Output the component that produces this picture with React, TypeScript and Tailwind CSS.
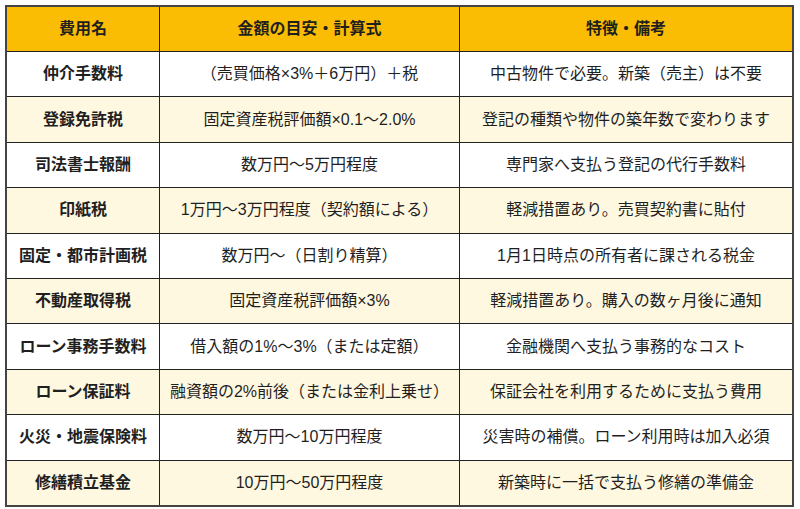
const rows = [
  ["仲介手数料", "（売買価格×3%＋6万円）＋税", "中古物件で必要。新築（売主）は不要"],
  ["登録免許税", "固定資産税評価額×0.1〜2.0%", "登記の種類や物件の築年数で変わります"],
  ["司法書士報酬", "数万円〜5万円程度", "専門家へ支払う登記の代行手数料"],
  ["印紙税", "1万円〜3万円程度（契約額による）", "軽減措置あり。売買契約書に貼付"],
  ["固定・都市計画税", "数万円〜（日割り精算）", "1月1日時点の所有者に課される税金"],
  ["不動産取得税", "固定資産税評価額×3%", "軽減措置あり。購入の数ヶ月後に通知"],
  ["ローン事務手数料", "借入額の1%〜3%（または定額）", "金融機関へ支払う事務的なコスト"],
  ["ローン保証料", "融資額の2%前後（または金利上乗せ）", "保証会社を利用するために支払う費用"],
  ["火災・地震保険料", "数万円〜10万円程度", "災害時の補償。ローン利用時は加入必須"],
  ["修繕積立基金", "10万円〜50万円程度", "新築時に一括で支払う修繕の準備金"],
];

export default function App() {
  return (
    <div
      className="bg-white w-[800px] h-[509px] pt-[5px] pl-[5px] text-[16px] text-[#1f1f1f]"
      style={{ fontFamily: '"Liberation Sans", "Noto Sans CJK JP", sans-serif' }}
    >
      <div className="w-[789px] border-2 border-[#444]">
        {/* Header */}
        <div className="flex h-[44px] bg-[#fbbc04] font-bold">
          <div className="w-[153px] flex items-center justify-center border-r border-[#222]">費用名</div>
          <div className="w-[300px] flex items-center justify-center border-r border-[#222]">金額の目安・計算式</div>
          <div className="flex-1 flex items-center justify-center">特徴・備考</div>
        </div>

        {/* Body */}
        {rows.map((r, i) => (
          <div
            key={r[0]}
            className={`flex h-[45.4px] border-t border-[#222] ${i % 2 === 0 ? "bg-white" : "bg-[#fff8e1]"}`}
          >
            <div className="w-[153px] flex items-center justify-center border-r border-[#222] font-bold">{r[0]}</div>
            <div className="w-[300px] flex items-center justify-center border-r border-[#222]">{r[1]}</div>
            <div className="flex-1 flex items-center justify-center">{r[2]}</div>
          </div>
        ))}
      </div>
    </div>
  );
}
